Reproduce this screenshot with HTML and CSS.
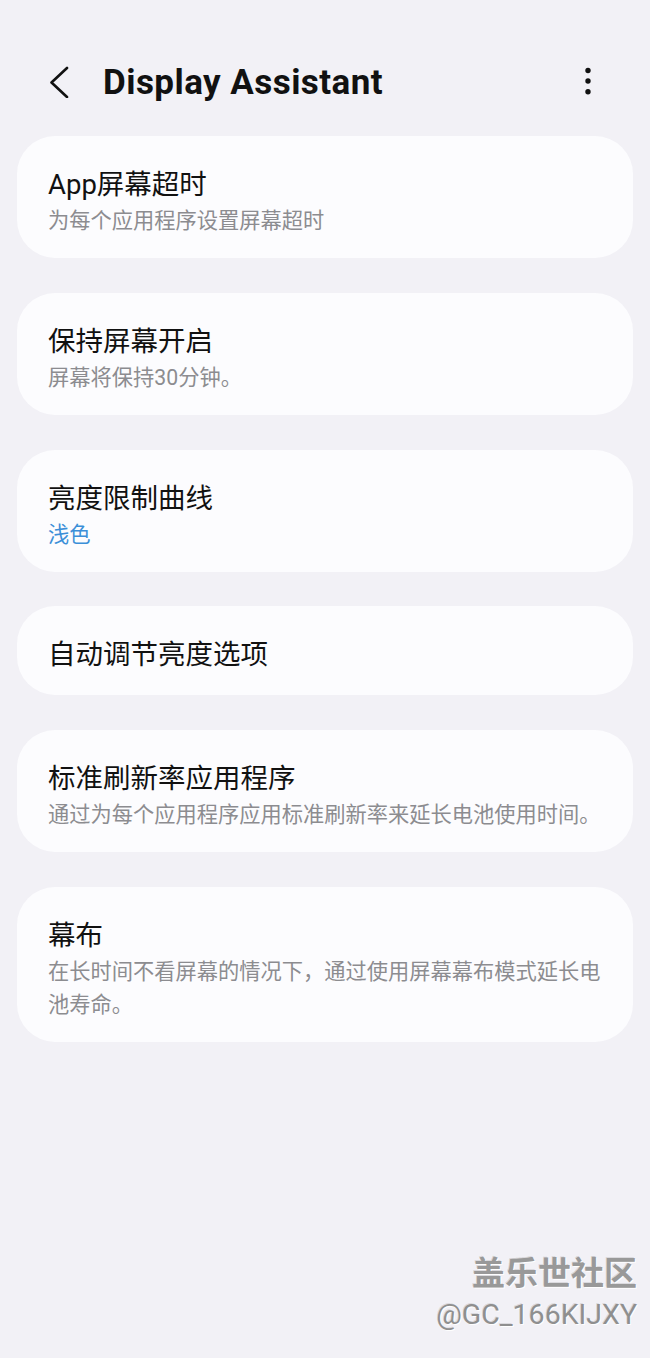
FILE: index.html
```html
<!DOCTYPE html>
<html lang="zh-CN">
<head>
  <meta charset="UTF-8" />
  <meta name="viewport" content="width=device-width, initial-scale=1.0" />
  <title>Display Assistant</title>
  <link rel="stylesheet" href="styles.css">
</head>
<body>
  <div class="header">
    <svg class="back" width="22" height="32" viewBox="0 0 22 32">
      <path d="M19 2 L3.5 16.5 L19 31" fill="none" stroke="#111" stroke-width="2.6" stroke-linecap="round" stroke-linejoin="round" />
    </svg>
    <h1 class="title">Display Assistant</h1>
    <svg class="more" width="12" height="32" viewBox="0 0 12 32">
      <circle cx="6" cy="4.5" r="2.7" fill="#111" />
      <circle cx="6" cy="15" r="2.7" fill="#111" />
      <circle cx="6" cy="25.7" r="2.7" fill="#111" />
    </svg>
  </div>

  <div class="list">
    <div class="card">
      <div class="card-title">App屏幕超时</div>
      <div class="card-sub">为每个应用程序设置屏幕超时</div>
    </div>
    <div class="card">
      <div class="card-title">保持屏幕开启</div>
      <div class="card-sub">屏幕将保持30分钟。</div>
    </div>
    <div class="card">
      <div class="card-title">亮度限制曲线</div>
      <div class="card-sub blue">浅色</div>
    </div>
    <div class="card">
      <div class="card-title">自动调节亮度选项</div>
    </div>
    <div class="card">
      <div class="card-title">标准刷新率应用程序</div>
      <div class="card-sub">通过为每个应用程序应用标准刷新率来延长电池使用时间。</div>
    </div>
    <div class="card">
      <div class="card-title">幕布</div>
      <div class="card-sub">在长时间不看屏幕的情况下，通过使用屏幕幕布模式延长电池寿命。</div>
    </div>
  </div>

  <div class="watermark">
    <div class="wm-site">盖乐世社区</div>
    <div class="wm-user">@GC_166KIJXY</div>
  </div>
</body>
</html>
```

FILE: styles.css
```css
body {
  margin: 0;
  background-color: #f2f1f6;
  font-family: Roboto, "Noto Sans CJK SC", sans-serif;
  color: #111;
  min-height: 1358px;
  position: relative;
}
.header {
  display: flex;
  align-items: center;
  height: 64px;
  margin-top: 50px;
  padding: 0 56px 0 48px;
}
.back {
  flex-shrink: 0;
}
.title {
  margin: 0 0 0 33px;
  font-size: 35px;
  font-weight: 700;
  letter-spacing: 0.45px;
  color: #111;
}
.more {
  margin-left: auto;
}
.list {
  display: flex;
  flex-direction: column;
  gap: 34.8px;
  margin: 22px 17px 0;
}
.card {
  background: #fcfcfe;
  border-radius: 38px;
  padding: 29px 31px 21px;
}
.card-title {
  font-size: 27.5px;
  line-height: 39px;
  color: #111;
}
.card-sub {
  font-size: 21.25px;
  line-height: 33px;
  color: #8c8c90;
}
.card-sub.blue {
  color: #3b8fd8;
}
.watermark {
  position: absolute;
  right: 13px;
  top: 1253px;
  text-align: right;
  color: #8f8f8f;
  text-shadow: 1px 1px 0 rgba(255, 255, 255, 0.95), -1px -1px 0 rgba(0, 0, 0, 0.1);
}
.wm-site {
  font-size: 33px;
  line-height: 42px;
  font-weight: 700;
  color: #999;
}
.wm-user {
  font-size: 28.5px;
  line-height: 40px;
}
```
